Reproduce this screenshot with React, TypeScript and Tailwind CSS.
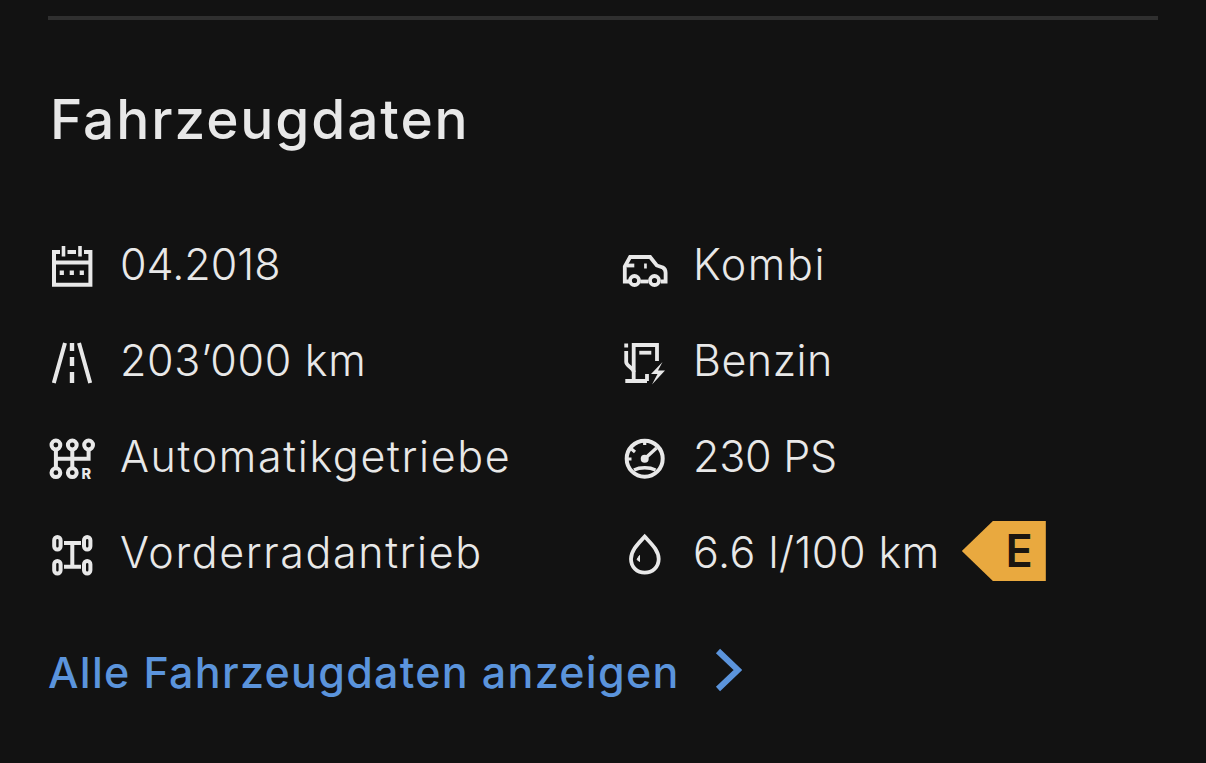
import React from 'react'

const CalendarIcon = () => (
  <svg width="48" height="48" viewBox="0 0 48 48" fill="none" stroke="currentColor" strokeWidth="4">
    <path d="M12 10H6V42.7H42.4V10H36M19.5 10H28" />
    <path d="M15.5 4V14.5M32 4V14.5" strokeWidth="3.6" />
    <path d="M6 20.5H42.4" />
    <path d="M11.7 30.7H15.9M21.7 30.7H25.9M31.7 30.7H35.9" strokeWidth="4.4" />
  </svg>
)

const RoadIcon = () => (
  <svg width="48" height="48" viewBox="0 0 48 48" fill="none" stroke="currentColor" strokeWidth="4">
    <path d="M17 5L5.8 45M31 5L42.2 45" />
    <path d="M24 5V13M24 19V28M24 34V45" strokeWidth="4.4" />
  </svg>
)

const GearIcon = () => (
  <svg width="48" height="48" viewBox="-0.6 0 48 48" fill="none" stroke="currentColor" strokeWidth="4">
    <path d="M7.3 16V34M23.7 16V34M40 16V24.7H7.3" />
    <circle cx="7.3" cy="11" r="4.4" />
    <circle cx="23.7" cy="11" r="4.4" />
    <circle cx="40" cy="11" r="4.4" />
    <circle cx="7.3" cy="38.7" r="4.4" />
    <circle cx="23.7" cy="38.7" r="4.4" />
    <text x="33" y="45" fill="currentColor" stroke="none" fontSize="14.5" fontWeight="800" fontFamily="Inter, sans-serif">R</text>
  </svg>
)

const DriveIcon = () => (
  <svg width="48" height="48" viewBox="0 0 48 48" fill="none" stroke="currentColor" strokeWidth="4">
    <rect x="6.2" y="7" width="6.4" height="12.4" rx="3.2" />
    <rect x="36" y="7" width="6.4" height="12.4" rx="3.2" />
    <rect x="6.2" y="31" width="6.4" height="12.4" rx="3.2" />
    <rect x="36" y="31" width="6.4" height="12.4" rx="3.2" />
    <path d="M16 13H33M16 36.7H33M24.3 13V36.7" />
  </svg>
)

const CarIcon = () => (
  <svg width="48" height="48" viewBox="-0.8 0 48 48" fill="none" stroke="currentColor" strokeWidth="3.8">
    <path d="M7.5 39.5H3V24.5L8.3 15H28.3L35 23.5L41 25.5C42.8 26.5 43.8 28.5 43.8 30.7V39.5H39" />
    <path d="M18.5 39.5H26.5" />
    <path d="M5 23.5H12.5" />
    <path d="M22.3 21.5H25V26.5H22.3Z" fill="currentColor" stroke="none" />
    <circle cx="12.7" cy="38.5" r="4.5" />
    <circle cx="32.7" cy="38.5" r="4.5" />
  </svg>
)

const FuelIcon = () => (
  <svg width="48" height="48" viewBox="-1 0 48 48" fill="none" stroke="currentColor" strokeWidth="3.8">
    <path d="M3.3 43H25M11.7 43V7H35V23" />
    <path d="M25 36V43" />
    <path d="M17.3 14.7H29.3" />
    <path d="M4.2 5.5V9.5M4.2 13V24C4.2 28 11.7 30 11.7 34" />
    <path d="M40.5 24L29 36H35.5L30 46.5L43 32.5H36L40.5 24Z" fill="currentColor" stroke="none" />
  </svg>
)

const GaugeIcon = () => (
  <svg width="48" height="48" viewBox="-1 0 48 48" fill="none" stroke="currentColor" strokeWidth="4">
    <circle cx="22.7" cy="24.7" r="18" />
    <path d="M22.7 6.5V11M9.5 15L13 18M5 25H9.5" strokeWidth="3.2" />
    <path d="M22.7 24.7L34.5 14" strokeWidth="3.4" />
    <circle cx="22.7" cy="24.7" r="4" fill="currentColor" stroke="none" />
    <path d="M12 36C18 33 27.5 33 33.5 36" strokeWidth="3.6" />
  </svg>
)

const DropIcon = () => (
  <svg width="48" height="48" viewBox="-1 0 48 48" fill="none" stroke="currentColor" strokeWidth="3.8">
    <path d="M22.7 6.5C17 13 9 20 9 29C9 37 15 42.7 22.7 42.7C30.5 42.7 36.7 37 36.7 29C36.7 20 28.5 13 22.7 6.5Z" />
    <path d="M17.5 25.5V31.5L15 29.5Z" fill="currentColor" stroke="currentColor" strokeWidth="1" />
  </svg>
)

const rows = [
  { icon: <CalendarIcon />, label: '04.2018', tracking: 'tracking-normal' },
  { icon: <CarIcon />, label: 'Kombi', tracking: 'tracking-[1.6px]' },
  { icon: <RoadIcon />, label: '203’000 km', tracking: 'tracking-[0.7px]' },
  { icon: <FuelIcon />, label: 'Benzin', tracking: 'tracking-[0.5px]' },
  { icon: <GearIcon />, label: 'Automatikgetriebe', tracking: 'tracking-[1.65px]' },
  { icon: <GaugeIcon />, label: '230 PS', tracking: 'tracking-[-0.2px]' },
  { icon: <DriveIcon />, label: 'Vorderradantrieb', tracking: 'tracking-[1.6px]' },
  { icon: <DropIcon />, label: '6.6 l/100 km', tracking: 'tracking-[0.5px]', badge: 'E' },
]

const App = () => {
  return (
    <div className="h-[763px] w-full overflow-hidden bg-[#121212] pl-12 pr-12 pt-4 font-['Inter',sans-serif] text-[#e8e8e8]">
      <div className="h-1 bg-[#2f2f2f]" />

      <h2 className="mt-[67px] pl-0.5 text-[55px] font-medium leading-[64px] tracking-[1.9px]">Fahrzeugdaten</h2>

      <div className="mt-[91px] grid grid-cols-[573px_1fr] gap-y-12">
        {rows.map((row) => (
          <div key={row.label} className="flex h-12 items-center gap-6">
            {row.icon}
            <span className={`pb-1 text-[43px] font-[350] leading-[48px] ${row.tracking}`}>{row.label}</span>
            {row.badge && (
              <span className="-ml-0.5 mb-[6px] flex h-[60px] w-[84px] items-center justify-end bg-[#e9a93f] pr-[13px] text-[45px] font-semibold text-[#1b1610] [clip-path:polygon(0_50%,37%_0,100%_0,100%_100%,37%_100%)]">
                {row.badge}
              </span>
            )}
          </div>
        ))}
      </div>

      <div className="mt-[70px] flex items-center gap-[34px] text-[#5b94dc]">
        <span className="text-[43px] font-medium leading-[48px] tracking-[1.3px]">Alle Fahrzeugdaten anzeigen</span>
        <svg className="mb-1" width="28" height="44" viewBox="0 0 28 44" fill="none" stroke="currentColor" strokeWidth="6">
          <path d="M4 3L24 22L4 41" />
        </svg>
      </div>
    </div>
  )
}

export default App
